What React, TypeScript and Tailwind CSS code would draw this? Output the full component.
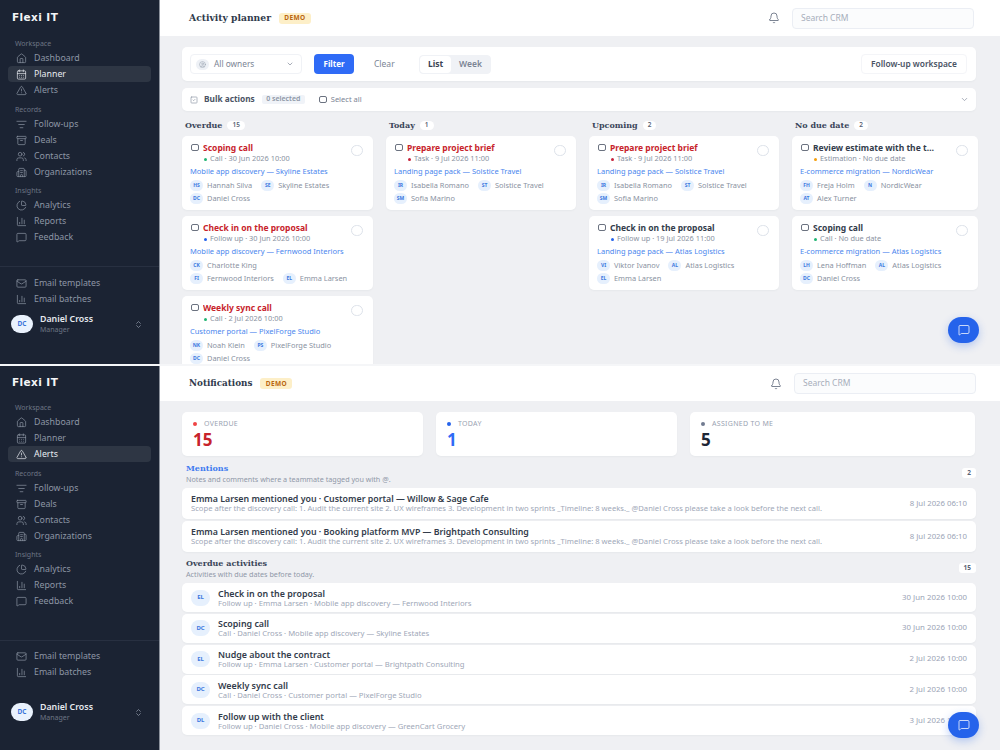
import React from "react";
import { House, CalendarDays, TriangleAlert, ListFilter, Archive, Users, Building2, ChartPie, ChartColumn, MessageSquare, Mail, ChevronsUpDown, Bell, SquareCheck, CircleUser, ChevronDown } from "lucide-react";

const body = "font-['Noto_Sans','Open_Sans',sans-serif]";
const serif = "font-['DejaVu_Serif','Liberation_Serif',serif]";

function NavItem({ icon: Icon, label, active }: { icon: any; label: string; active?: boolean }) {
  return (
    <div className={`h-4 flex items-center rounded-[4px] pl-2 gap-[7px] text-[8.8px] leading-none ${active ? "bg-[#2e3644] text-[#e8ebf0]" : "text-[#8d96a5]"}`}>
      <Icon size={11} strokeWidth={1.5} className="shrink-0" />
      <span>{label}</span>
    </div>
  );
}

function Section({ title, items, active, gapTop }: { title: string; items: [any, string][]; active?: string; gapTop: string }) {
  return (
    <div className={gapTop}>
      <div className="text-[7px] leading-none text-[#6c7584] pl-[7px] mb-[3px] h-[8px] flex items-center">{title}</div>
      {items.map(([icon, label]) => (
        <NavItem key={label} icon={icon} label={label} active={label === active} />
      ))}
    </div>
  );
}

function Sidebar({ active, logoClass, footerLine, userGap, bottomPad }: { active: string; logoClass: string; footerLine: string; userGap: string; bottomPad: string }) {
  return (
    <aside className="w-[160px] shrink-0 bg-[#1b2333] flex flex-col border-r border-[#8b919c]">
      <div className={`${logoClass} pl-3 text-[10.5px] h-[12px] box-content leading-[12px] font-bold tracking-[0.4px] text-[#f4f5f7] font-['DejaVu_Sans',sans-serif]`}>Flexi IT</div>
      <div className="px-2">
        <Section title="Workspace" gapTop="" active={active} items={[[House, "Dashboard"], [CalendarDays, "Planner"], [TriangleAlert, "Alerts"]]} />
        <Section title="Records" gapTop="mt-[7.5px]" active={active} items={[[ListFilter, "Follow-ups"], [Archive, "Deals"], [Users, "Contacts"], [Building2, "Organizations"]]} />
        <Section title="Insights" gapTop="mt-[5.5px]" active={active} items={[[ChartPie, "Analytics"], [ChartColumn, "Reports"], [MessageSquare, "Feedback"]]} />
      </div>
      <div className={`mt-auto ${footerLine} border-t border-[#283041] px-2`}>
        <NavItem icon={Mail} label="Email templates" />
        <NavItem icon={ChartColumn} label="Email batches" />
      </div>
      <div className={`${userGap} ${bottomPad} flex items-center pl-[11px] pr-4 gap-[7px]`}>
        <div className="w-[22px] h-[18px] rounded-full bg-[#eaf2fd] text-[#3b73d9] text-[6.5px] font-bold flex items-center justify-center">DC</div>
        <div className="flex-1">
          <div className="text-[8.8px] leading-[11px] font-semibold text-[#e6e9ee]">Daniel Cross</div>
          <div className="text-[7px] leading-[10px] text-[#6c7584]">Manager</div>
        </div>
        <ChevronsUpDown size={9} className="text-[#8d96a5]" />
      </div>
    </aside>
  );
}

function Header({ title, h, pr, size }: { title: string; h: string; pr: string; size: string }) {
  return (
    <header className={`${h} ${pr} shrink-0 bg-white flex items-center pl-[29px]`}>
      <h1 className={`${serif} ${size} font-bold text-[#2f3a4c] leading-none`}>{title}</h1>
      <span className="ml-[8px] h-[11px] w-[32px] rounded-[3px] bg-[#fdefc8] text-[#b9660f] text-[6.5px] font-bold tracking-[0.4px] flex items-center justify-center">DEMO</span>
      <Bell size={12} strokeWidth={1.5} className="ml-auto mr-[12px] text-[#515c70]" />
      <div className="w-[182px] h-[21px] rounded-[4px] border border-[#ebeef4] bg-[#fbfcfd] flex items-center pl-2 text-[8.5px] text-[#a7aebb]">Search CRM</div>
    </header>
  );
}

function Chip({ t }: { t: string }) {
  return <span className="w-[13px] h-[11px] rounded-full bg-[#e6f0fd] text-[#3b78e0] text-[5px] leading-[11px] font-bold flex items-center justify-center shrink-0">{t}</span>;
}

function Person({ i, n }: { i: string; n: string }) {
  return (
    <span className="flex items-center gap-[4px] text-[7.4px] leading-[11px] text-[#8a92a1] whitespace-nowrap">
      <Chip t={i} />
      {n}
    </span>
  );
}

type CardT = { title: string; red?: boolean; dot: string; meta: string; link: string; people: [string, string][][] };

function Card({ c }: { c: CardT }) {
  return (
    <div className="bg-white rounded-[5px] shadow-[0_1px_2px_rgba(30,40,60,0.04)] h-[74px] px-2 pt-[6px] relative shrink-0">
      <div className="flex items-center gap-[4px] h-[11px] pl-px">
        <span className="w-[8px] h-[7px] rounded-[2px] border border-[#6b7280] shrink-0" />
        <span className={`truncate max-w-[122px] text-[8.5px] font-bold leading-[11px] ${c.red ? "text-[#c7232b]" : "text-[#333c4b]"}`}>{c.title}</span>
      </div>
      <div className="absolute right-[10px] top-[9px] w-[12px] h-[11px] rounded-full border border-[#dde2ea]" />
      <div className="flex items-center gap-[3px] pl-[14px] mt-px h-[10px] text-[7.4px] text-[#8a92a1] leading-none">
        <span className={`w-[3px] h-[3px] rounded-full ${c.dot}`} />
        <span>{c.meta}</span>
      </div>
      <div className="mt-[2px] text-[7.5px] h-[10px] leading-[10px] text-[#4a86ee] whitespace-nowrap">{c.link}</div>
      <div className="mt-[2.5px] flex flex-col">
        {c.people.map((row, i) => (
          <div key={i} className="flex items-center gap-[9px] h-[13.5px]">
            {row.map(([a, b]) => <Person key={b} i={a} n={b} />)}
          </div>
        ))}
      </div>
    </div>
  );
}

const green = "bg-[#22b573]";
const blue = "bg-[#2563eb]";
const red = "bg-[#c7233b]";
const orange = "bg-[#f59e0b]";

const cols: { title: string; count: string; cards: CardT[] }[] = [
  { title: "Overdue", count: "15", cards: [
    { title: "Scoping call", red: true, dot: green, meta: "Call · 30 Jun 2026 10:00", link: "Mobile app discovery — Skyline Estates", people: [[["HS", "Hannah Silva"], ["SE", "Skyline Estates"]], [["DC", "Daniel Cross"]]] },
    { title: "Check in on the proposal", red: true, dot: blue, meta: "Follow up · 30 Jun 2026 10:00", link: "Mobile app discovery — Fernwood Interiors", people: [[["CK", "Charlotte King"]], [["FI", "Fernwood Interiors"], ["EL", "Emma Larsen"]]] },
    { title: "Weekly sync call", red: true, dot: green, meta: "Call · 2 Jul 2026 10:00", link: "Customer portal — PixelForge Studio", people: [[["NK", "Noah Klein"], ["PS", "PixelForge Studio"]], [["DC", "Daniel Cross"]]] },
  ]},
  { title: "Today", count: "1", cards: [
    { title: "Prepare project brief", red: true, dot: red, meta: "Task · 9 Jul 2026 11:00", link: "Landing page pack — Solstice Travel", people: [[["IR", "Isabella Romano"], ["ST", "Solstice Travel"]], [["SM", "Sofia Marino"]]] },
  ]},
  { title: "Upcoming", count: "2", cards: [
    { title: "Prepare project brief", red: true, dot: red, meta: "Task · 9 Jul 2026 11:00", link: "Landing page pack — Solstice Travel", people: [[["IR", "Isabella Romano"], ["ST", "Solstice Travel"]], [["SM", "Sofia Marino"]]] },
    { title: "Check in on the proposal", dot: blue, meta: "Follow up · 19 Jul 2026 11:00", link: "Landing page pack — Atlas Logistics", people: [[["VI", "Viktor Ivanov"], ["AL", "Atlas Logistics"]], [["EL", "Emma Larsen"]]] },
  ]},
  { title: "No due date", count: "2", cards: [
    { title: "Review estimate with the team", dot: orange, meta: "Estimation · No due date", link: "E-commerce migration — NordicWear", people: [[["FH", "Freja Holm"], ["N", "NordicWear"]], [["AT", "Alex Turner"]]] },
    { title: "Scoping call", dot: green, meta: "Call · No due date", link: "E-commerce migration — Atlas Logistics", people: [[["LH", "Lena Hoffman"], ["AL", "Atlas Logistics"]], [["DC", "Daniel Cross"]]] },
  ]},
];

function Fab({ pos }: { pos: string }) {
  return (
    <div className={`absolute ${pos} w-[31px] h-[26px] rounded-full bg-[#2563eb] shadow-[0_3px_8px_rgba(37,99,235,0.3)] flex items-center justify-center`}>
      <MessageSquare size={12} strokeWidth={1.5} className="text-white" />
    </div>
  );
}

function Planner() {
  return (
    <div className="h-[366px] flex overflow-hidden border-b-2 border-[#f5f6f8]">
      <Sidebar active="Planner" logoClass="pt-[11px] pb-[16px]" footerLine="pt-[8px]" userGap="mt-[6.5px]" bottomPad="pb-[29.5px]" />
      <main className="flex-1 min-w-0 flex flex-col relative bg-[#eff0f3]">
        <Header title="Activity planner" h="h-[36px]" pr="pr-[26px]" size="text-[9.2px]" />
        <div className="pl-[22px] pr-[24px] pt-[11px]">
          <div className="bg-white rounded-[5px] h-[34px] flex items-center px-2 shadow-[0_1px_2px_rgba(30,40,60,0.04)]">
            <div className="w-[112px] h-[20px] rounded-[4px] border border-[#f0f2f6] flex items-center pl-[5px] pr-[7px] text-[8.3px] text-[#7b8494]">
              <span className="w-[13px] h-[11px] rounded-full bg-[#eef1f6] flex items-center justify-center">
                <CircleUser size={7} className="text-[#9aa3b2]" />
              </span>
              <span className="ml-[5px]">All owners</span>
              <ChevronDown size={8} className="ml-auto text-[#7b8494]" />
            </div>
            <div className="ml-[12px] w-[40px] h-[20px] rounded-[4px] bg-[#2f6bf6] text-white text-[8px] font-bold flex items-center justify-center">Filter</div>
            <div className="ml-[20px] text-[8.5px] text-[#7b8494] w-[31px]">Clear</div>
            <div className="ml-[14px] h-[19px] w-[72px] rounded-[4px] bg-[#f0f2f6] border border-[#f0f2f6] flex text-[8.5px] items-center">
              <div className="w-[31px] h-full rounded-[4px] bg-white font-bold text-[#3a4353] flex items-center justify-center">List</div>
              <div className="flex-1 text-center text-[#7b8494] font-semibold">Week</div>
            </div>
            <div className="ml-auto mr-px h-[20px] w-[106px] rounded-[4px] border border-[#f4f5f8] text-[8.4px] font-semibold text-[#4a5364] flex items-center justify-center">Follow-up workspace</div>
          </div>
          <div className="mt-[7px] bg-white rounded-[5px] h-[23px] flex items-center pl-2 pr-[7px] shadow-[0_1px_2px_rgba(30,40,60,0.04)]">
            <SquareCheck size={8} className="text-[#8d96a5]" />
            <span className="ml-[6px] text-[8.3px] font-bold text-[#4a5364]">Bulk actions</span>
            <span className="ml-[7px] h-[9px] w-[43px] justify-center rounded-[2px] bg-[#f0f3f8] text-[7px] font-semibold text-[#8d96a5] flex items-center">0 selected</span>
            <span className="ml-[14px] w-[8px] h-[7px] rounded-[2px] border border-[#6b7280]" />
            <span className="ml-[4px] text-[7.5px] text-[#7b8494]">Select all</span>
            <ChevronDown size={9} className="ml-auto text-[#8d96a5]" />
          </div>
          <div className="mt-[9px] grid grid-cols-[191px_190px_190px_186px] gap-x-[13px] -mr-[2px]">
            {cols.map((col) => (
              <div key={col.title} className="flex flex-col gap-[6px]">
                <div className="flex items-center gap-[5px] pl-[3px] h-[10px]">
                  <span className={`${serif} text-[8px] font-bold text-[#3a4559] whitespace-nowrap leading-none`}>{col.title}</span>
                  <span className="h-[9px] px-[5px] rounded-full bg-white text-[6.5px] font-semibold text-[#5a6475] flex items-center">{col.count}</span>
                </div>
                {col.cards.map((c, i) => <Card key={i} c={c} />)}
              </div>
            ))}
          </div>
        </div>
        <Fab pos="right-[21px] top-[317px]" />
      </main>
    </div>
  );
}

function Stat({ dot, label, value, color, cls }: { dot: string; label: string; value: string; color: string; cls: string }) {
  return (
    <div className={`${cls} h-[44px] bg-white rounded-[5px] pl-[11px] pt-[7px] shadow-[0_1px_2px_rgba(30,40,60,0.04)]`}>
      <div className="flex items-center gap-[7px] h-[9px] text-[7px] tracking-[0.3px] text-[#9aa3b2] leading-none">
        <span className={`w-[4px] h-[4px] rounded-full ${dot}`} />
        {label}
      </div>
      <div className={`mt-[2px] text-[17px] leading-[20px] font-bold ${color}`}>{value}</div>
    </div>
  );
}

function SecHead({ title, sub, count, color, mt }: { title: string; sub: string; count: string; color: string; mt: string }) {
  return (
    <div className={`${mt} flex items-center pl-1 h-[24px]`}>
      <div>
        <div className={`${serif} text-[8px] leading-[11px] font-bold ${color}`}>{title}</div>
        <div className="text-[7.2px] leading-[10px] text-[#9098a8]">{sub}</div>
      </div>
      <span className="ml-auto h-[10px] px-[5px] rounded-[3px] bg-white text-[6.5px] font-bold text-[#5a6475] flex items-center">{count}</span>
    </div>
  );
}

const mentionText = "Scope after the discovery call: 1. Audit the current site 2. UX wireframes 3. Development in two sprints _Timeline: 8 weeks._ @Daniel Cross please take a look before the next call.";

const rows = [
  ["EL", "Check in on the proposal", "Follow up · Emma Larsen · Mobile app discovery — Fernwood Interiors", "30 Jun 2026 10:00"],
  ["DC", "Scoping call", "Call · Daniel Cross · Mobile app discovery — Skyline Estates", "30 Jun 2026 10:00"],
  ["EL", "Nudge about the contract", "Follow up · Emma Larsen · Customer portal — Brightpath Consulting", "2 Jul 2026 10:00"],
  ["DC", "Weekly sync call", "Call · Daniel Cross · Customer portal — PixelForge Studio", "2 Jul 2026 10:00"],
  ["DL", "Follow up with the client", "Follow up · Daniel Cross · Mobile app discovery — GreenCart Grocery", "3 Jul 2026 10:00"],
];

function Notifications() {
  return (
    <div className="h-[384px] flex overflow-hidden">
      <Sidebar active="Alerts" logoClass="pt-[10px] pb-[15px]" footerLine="pt-[7px]" userGap="mt-[21.5px]" bottomPad="pb-[27.5px]" />
      <main className="flex-1 min-w-0 flex flex-col relative bg-[#eff0f3]">
        <Header title="Notifications" h="h-[35px]" pr="pr-[24px]" size="text-[8.8px]" />
        <div className="pl-[22px] pr-[24px] pt-[11px]">
          <div className="flex gap-[13px] pr-px">
            <Stat cls="w-[241px]" dot="bg-[#ef4444]" label="OVERDUE" value="15" color="text-[#c7232b]" />
            <Stat cls="w-[241px]" dot="bg-[#2563eb]" label="TODAY" value="1" color="text-[#2f6bf6]" />
            <Stat cls="flex-1" dot="bg-[#717b90]" label="ASSIGNED TO ME" value="5" color="text-[#1e2635]" />
          </div>
          <SecHead mt="mt-[5px]" title="Mentions" sub="Notes and comments where a teammate tagged you with @." count="2" color="text-[#3f7cf0]" />
          <div className="mt-[3px] flex flex-col gap-[2px]">
            {[
              "Emma Larsen mentioned you · Customer portal — Willow & Sage Cafe",
              "Emma Larsen mentioned you · Booking platform MVP — Brightpath Consulting",
            ].map((t) => (
              <div key={t} className="h-[31px] bg-white rounded-[5px] flex items-center pl-[9px] pr-[9px] shadow-[0_1px_2px_rgba(30,40,60,0.04)]">
                <div className="flex-1">
                  <div className="text-[8.8px] leading-[10px] font-semibold text-[#333c4b]">{t}</div>
                  <div className="text-[7.65px] leading-[9px] text-[#a0a8b8]">{mentionText}</div>
                </div>
                <span className="text-[7.8px] text-[#9aa3b5]">8 Jul 2026 06:10</span>
              </div>
            ))}
          </div>
          <SecHead mt="mt-[4px]" title="Overdue activities" sub="Activities with due dates before today." count="15" color="text-[#3a4559]" />
          <div className="mt-[3px] flex flex-col gap-[1.75px]">
            {rows.map(([i, t, s, d], idx) => (
              <div key={idx} className="h-[29px] bg-white rounded-[5px] flex items-center pl-[9px] pr-[9px] shadow-[0_1px_2px_rgba(30,40,60,0.04)]">
                <span className="w-[19px] h-[16px] rounded-full bg-[#e6f0fd] text-[#3b78e0] text-[6px] font-bold flex items-center justify-center">{i}</span>
                <div className="ml-[8px] flex-1 pt-[1px]">
                  <div className="text-[8.9px] leading-[10px] font-semibold text-[#333c4b]">{t}</div>
                  <div className="text-[7.7px] leading-[9px] text-[#a0a8b8]">{s}</div>
                </div>
                <span className="text-[7.85px] text-[#9aa3b5]">{d}</span>
              </div>
            ))}
          </div>
        </div>
        <Fab pos="right-[21px] top-[346px]" />
      </main>
    </div>
  );
}

export default function App() {
  return (
    <div className={`${body} w-[1000px] h-[750px] overflow-hidden`}>
      <Planner />
      <Notifications />
    </div>
  );
}
